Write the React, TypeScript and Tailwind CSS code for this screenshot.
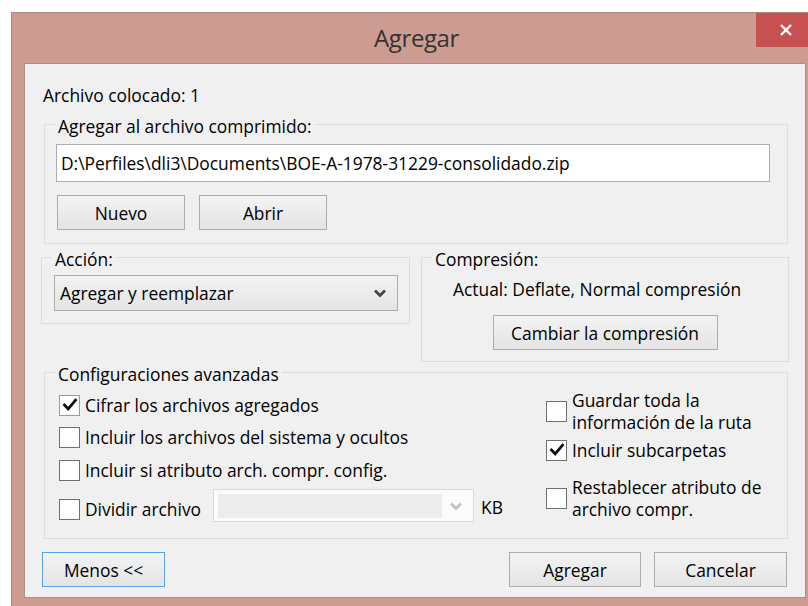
import React from "react";

function Check() {
  return (
    <svg width="16" height="16" viewBox="0 0 16 16">
      <path d="M2.5 8 L6.2 11.8 L13.5 3.2" fill="none" stroke="#111" strokeWidth="2.8" strokeLinecap="square" strokeLinejoin="miter" />
    </svg>
  );
}

function CheckBox({ checked = false, focused = false }: { checked?: boolean; focused?: boolean }) {
  return (
    <span
      className={
        "flex h-[21px] w-[21px] shrink-0 items-center justify-center border bg-white " +
        (focused ? "border-[#6aa5e0]" : "border-[#707070]")
      }
    >
      {checked && <Check />}
    </span>
  );
}

function Btn({ label, w, focused = false }: { label: string; w: string; focused?: boolean }) {
  return (
    <button
      className={
        "flex h-[35px] items-center justify-center border bg-linear-to-b from-[#f3f3f3] to-[#e4e4e4] text-[17.4px] text-black " +
        (focused ? "border-[#5aa2e8] " : "border-[#adadad] ") +
        w
      }
    >
      {label}
    </button>
  );
}

function Chevron({ color }: { color: string }) {
  return (
    <svg width="14" height="10" viewBox="0 0 14 10">
      <path d="M2 2.5 L7 7.5 L12 2.5" fill="none" stroke={color} strokeWidth="2.8" />
    </svg>
  );
}

export default function App() {
  return (
    <div className="h-[606px] w-[808px] overflow-hidden bg-white pl-[11px] pt-[12px] font-['Open_Sans',sans-serif] text-[17.4px] leading-[22px] text-black">
      <div className="h-[620px] w-[806px] border-l border-t border-[#a98a83] bg-[#cc9b91]">
        {/* title bar */}
        <div className="relative flex h-[50px] items-center justify-center">
          <span className="ml-[4px] text-[24px] tracking-[-0.4px] text-[#333]">Agregar</span>
          <div className="absolute right-[1px] top-0 flex h-[34px] w-[60px] items-center justify-center bg-[#c75050]">
            <svg width="14" height="14" viewBox="0 0 14 14">
              <path d="M2 2 L12 12 M12 2 L2 12" stroke="#fff" strokeWidth="2.4" />
            </svg>
          </div>
        </div>

        {/* client area */}
        <div className="ml-[12px] flex h-[535px] w-[782px] flex-col border border-[#b28d85] bg-[#f0f0f0]">
          <div className="ml-[18px] mt-[20px] h-[22px]">Archivo colocado: 1</div>

          <fieldset className="ml-[19px] mt-[5px] w-[744px] border border-[#dcdcdc] pb-[13px] pl-[11px] pr-[17px]">
            <legend className="-ml-[1px] px-[3px] pt-[4px]">Agregar al archivo comprimido:</legend>
            <div className="mt-[7px] flex h-[38px] items-center border border-[#abadb3] bg-white pl-[4px]">
              D:\Perfiles\dli3\Documents\BOE-A-1978-31229-consolidado.zip
            </div>
            <div className="mt-[13px] flex gap-[14px] pl-[1px]">
              <Btn label="Nuevo" w="w-[128px] h-[34px]" />
              <Btn label="Abrir" w="w-[128px] h-[34px]" />
            </div>
          </fieldset>

          <div className="flex items-start">
            <fieldset className="ml-[16px] w-[369px] border border-[#dcdcdc] pb-[12px] pl-[12px] pr-[11px]">
              <legend className="-ml-[2px] px-[3px] pt-[4px]">Acción:</legend>
              <div className="mt-[5px] flex h-[36px] items-center justify-between border border-[#acacac] bg-linear-to-b from-[#f2f2f2] to-[#e5e5e5] pl-[5px] pr-[10px]">
                <span>Agregar y reemplazar</span>
                <Chevron color="#444" />
              </div>
            </fieldset>
            <fieldset className="ml-[11px] w-[368px] border border-[#dcdcdc] pb-[11px]">
              <legend className="ml-[10px] px-[3px] pt-[4px]">Compresión:</legend>
              <div className="ml-[31px] mt-[8px] h-[22px]">Actual: Deflate, Normal compresión</div>
              <div className="mt-[15px] flex justify-center">
                <Btn label="Cambiar la compresión" w="w-[225px] h-[34px]" />
              </div>
            </fieldset>
          </div>

          <fieldset className="-mt-[3px] ml-[19px] w-[744px] border border-[#dcdcdc] pb-[16px] pl-[14px]">
            <legend className="-ml-[4px] px-[3px] pt-[4px]">Configuraciones avanzadas</legend>
            <div className="flex">
              <div className="mt-[9px] flex w-[446px] flex-col">
                <div className="flex h-[22px] items-center gap-[5px]">
                  <CheckBox checked focused />
                  <span>Cifrar los archivos agregados</span>
                </div>
                <div className="mt-[10px] flex h-[22px] items-center gap-[5px]">
                  <CheckBox />
                  <span>Incluir los archivos del sistema y ocultos</span>
                </div>
                <div className="mt-[11px] flex h-[22px] items-center gap-[5px]">
                  <CheckBox />
                  <span>Incluir si atributo arch. compr. config.</span>
                </div>
                <div className="mt-[8px] flex h-[33px] items-center">
                  <div className="mt-[7px] flex w-[154px] items-center gap-[5px]">
                    <CheckBox />
                    <span>Dividir archivo</span>
                  </div>
                  <div className="flex h-[33px] w-[261px] items-center border border-[#d9d9d9] bg-[#fbfbfb] px-[4px]">
                    <div className="h-[24px] w-[224px] bg-[#ececec]" />
                    <div className="flex flex-1 justify-center">
                      <Chevron color="#c4c4c4" />
                    </div>
                  </div>
                  <span className="ml-[7px] mt-[2px]">KB</span>
                </div>
              </div>

              <div className="ml-[41px] mt-[4px] flex flex-col">
                <div className="flex h-[44px] items-center gap-[5px]">
                  <CheckBox />
                  <span>
                    Guardar toda la
                    <br />
                    información de la ruta
                  </span>
                </div>
                <div className="mt-[6px] flex h-[22px] items-center gap-[5px]">
                  <CheckBox checked />
                  <span>Incluir subcarpetas</span>
                </div>
                <div className="mt-[15px] flex h-[44px] items-center gap-[5px]">
                  <CheckBox />
                  <span>
                    Restablecer atributo de
                    <br />
                    archivo compr.
                  </span>
                </div>
              </div>
            </div>
          </fieldset>

          <div className="mt-[13px] flex">
            <div className="ml-[17px]">
              <Btn label="Menos <<" w="w-[123px]" focused />
            </div>
            <div className="ml-[344px]">
              <Btn label="Agregar" w="w-[132px]" />
            </div>
            <div className="ml-[13px]">
              <Btn label="Cancelar" w="w-[133px]" />
            </div>
          </div>
        </div>
      </div>
    </div>
  );
}
